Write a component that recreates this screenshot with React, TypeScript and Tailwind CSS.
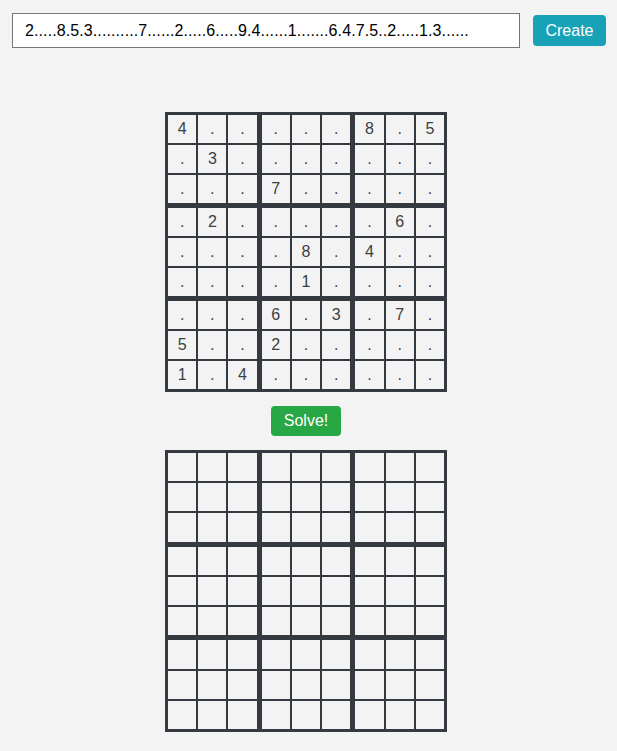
import { useState } from 'react'

const PUZZLE = '4.....8.5.3..........7......2.....6.....8.4......1.......6.3.7.5..2.....1.4......'

function cellAt(board: string, box: number, k: number) {
  const row = Math.floor(box / 3) * 3 + Math.floor(k / 3)
  const col = (box % 3) * 3 + (k % 3)
  return board[row * 9 + col] ?? ''
}

function Board({ board, tall }: { board: string; tall?: boolean }) {
  return (
    <div
      className={
        tall
          ? 'grid grid-cols-3 grid-rows-3 gap-[5px] p-[3px] w-[282px] h-[282px] bg-[#343a40]'
          : 'grid grid-cols-3 grid-rows-3 gap-[5px] p-[3px] w-[282px] h-[280px] bg-[#343a40]'
      }
    >
      {Array.from({ length: 9 }, (_, box) => (
        <div key={box} className="grid grid-cols-3 grid-rows-3 gap-[2px]">
          {Array.from({ length: 9 }, (_, k) => (
            <div
              key={k}
              className="bg-[#f3f3f3] flex items-center justify-center text-[16px] text-[#3a3f44]"
            >
              {cellAt(board, box, k)}
            </div>
          ))}
        </div>
      ))}
    </div>
  )
}

export default function App() {
  const [value, setValue] = useState(
    '2.....8.5.3..........7......2.....6.....9.4......1.......6.4.7.5..2.....1.3......'
  )

  return (
    <div className="min-h-[751px] bg-[#f3f3f3] font-['Liberation_Sans',Arial,sans-serif]">
      <div className="flex items-center gap-[13px] pt-[13px] pl-[12px]">
        <input
          value={value}
          onChange={(e) => setValue(e.target.value)}
          className="w-[508px] h-[35px] border border-[#767676] bg-white px-3 text-[16px] tracking-[0.1px] text-black outline-none"
        />
        <button className="h-[31px] w-[73px] rounded-[4px] bg-[#17a2b8] text-[16px] text-white">
          Create
        </button>
      </div>

      <div className="w-[612px] flex flex-col items-center mt-[64px]">
        <Board board={PUZZLE} />
        <button className="my-[14px] h-[30px] w-[70px] rounded-[4px] bg-[#28a745] text-[16px] text-white">
          Solve!
        </button>
        <Board board={''} tall />
      </div>
    </div>
  )
}
